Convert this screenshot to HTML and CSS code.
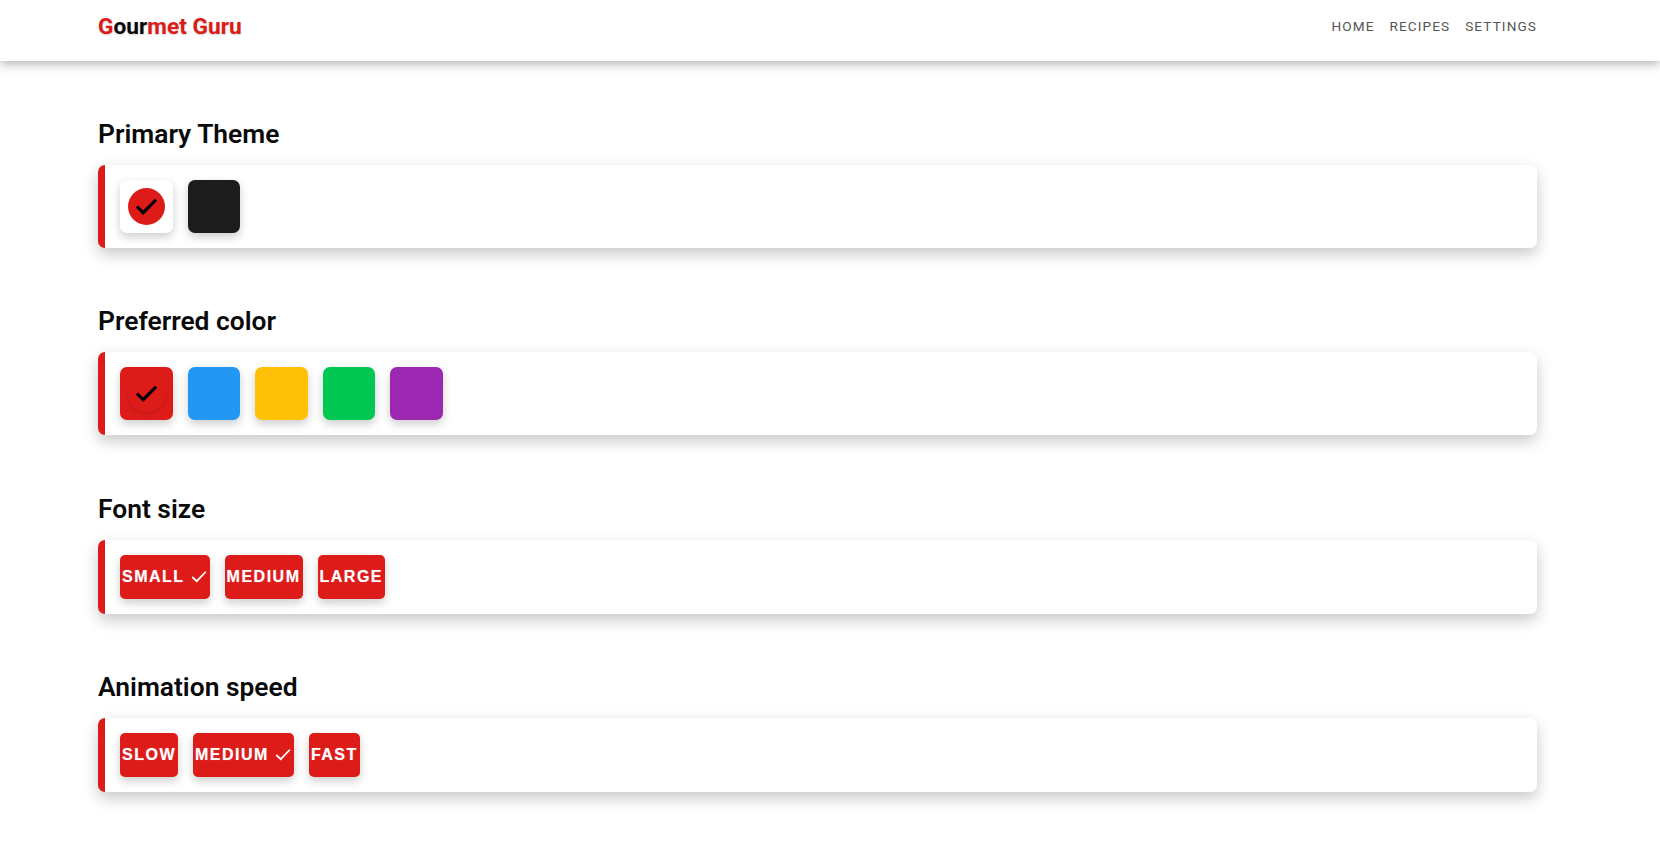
FILE: index.html
```html
<!DOCTYPE html>
<html lang="en">
<head>
  <meta charset="UTF-8" />
  <title>Gourmet Guru - Settings</title>
  <link rel="stylesheet" href="styles.css">
</head>
<body>

<header class="navbar">
  <div class="brand"><span class="red">G</span>our<span class="red">met Guru</span></div>
  <nav class="nav-links">
    <a href="#">Home</a>
    <a href="#">Recipes</a>
    <a href="#">Settings</a>
  </nav>
</header>

<main class="content">
  <section class="setting">
    <h2>Primary Theme</h2>
    <div class="card">
      <button class="swatch white" type="button">
        <span class="tick-circle">
          <svg viewBox="0 0 24 24"><path d="M3.5 12l5.5 5.5 11.5-11.5"/></svg>
        </span>
      </button>
      <button class="swatch dark" type="button"></button>
    </div>
  </section>

  <section class="setting">
    <h2>Preferred color</h2>
    <div class="card">
      <button class="swatch red-bg" type="button">
        <span class="tick-circle raised">
          <svg viewBox="0 0 24 24"><path d="M3.5 12l5.5 5.5 11.5-11.5"/></svg>
        </span>
      </button>
      <button class="swatch blue" type="button"></button>
      <button class="swatch amber" type="button"></button>
      <button class="swatch green" type="button"></button>
      <button class="swatch purple" type="button"></button>
    </div>
  </section>

  <section class="setting">
    <h2>Font size</h2>
    <div class="card">
      <button class="pill" type="button">Small
        <svg class="pill-tick" viewBox="0 0 24 24"><path d="M3 12l6 5.5L21 5"/></svg>
      </button>
      <button class="pill" type="button">Medium</button>
      <button class="pill" type="button">Large</button>
    </div>
  </section>

  <section class="setting">
    <h2>Animation speed</h2>
    <div class="card">
      <button class="pill" type="button">Slow</button>
      <button class="pill" type="button">Medium
        <svg class="pill-tick" viewBox="0 0 24 24"><path d="M3 12l6 5.5L21 5"/></svg>
      </button>
      <button class="pill" type="button">Fast</button>
    </div>
  </section>
</main>

</body>
</html>
```

FILE: styles.css
```css
* { box-sizing: border-box; margin: 0; padding: 0; }

body {
  font-family: Roboto, sans-serif;
  background: #fff;
  color: #0a0a0a;
}

.navbar {
  height: 61px;
  padding: 0 123px 9px 98px;
  display: flex;
  align-items: center;
  justify-content: space-between;
  background: #fff;
  box-shadow: 0 3px 10px rgba(0, 0, 0, 0.3);
}

.brand {
  font-size: 22.7px;
  font-weight: 700;
  text-shadow: 0 1px 2px rgba(0, 0, 0, 0.2);
}

.red { color: #dd1c1a; }

.nav-links {
  display: flex;
  gap: 15px;
}

.nav-links a {
  font-size: 13.6px;
  letter-spacing: 1.1px;
  text-transform: uppercase;
  text-decoration: none;
  color: #555;
}

.content {
  padding: 58px 123px 0 98px;
}

.setting {
  margin-bottom: 58.3px;
}

h2 {
  font-size: 26.4px;
  font-weight: 600;
  line-height: 30px;
  margin-bottom: 16px;
}

.card {
  display: flex;
  gap: 15px;
  padding: 15px;
  background: #fff;
  border-left: 7px solid #dd1c1a;
  border-radius: 7px;
  box-shadow: 0 6px 15px rgba(0, 0, 0, 0.22);
}

.swatch {
  width: 52.5px;
  height: 53px;
  border: none;
  border-radius: 7px;
  display: flex;
  align-items: center;
  justify-content: center;
  box-shadow: 0 4px 10px rgba(0, 0, 0, 0.2);
}

.white { background: #fff; }
.dark { background: #1c1c1c; }
.red-bg { background: #dd1c1a; }
.blue { background: #2196f3; }
.amber { background: #ffc107; }
.green { background: #00c853; }
.purple { background: #9c27b0; }

.tick-circle {
  width: 37px;
  height: 37px;
  border-radius: 50%;
  background: #dd1c1a;
  display: flex;
  align-items: center;
  justify-content: center;
}

.tick-circle.raised {
  box-shadow: 0 2px 5px rgba(0, 0, 0, 0.12);
}

.tick-circle svg {
  width: 27px;
  height: 27px;
  fill: none;
  stroke: #000;
  stroke-width: 2.8;
}

.pill {
  height: 44px;
  padding: 0 2px;
  border: none;
  border-radius: 5px;
  background: #dd1c1a;
  color: #fff;
  font-family: "Liberation Sans", Arial, sans-serif;
  font-size: 16px;
  font-weight: 700;
  letter-spacing: 1.5px;
  text-shadow: 0 0 1px rgba(255, 255, 255, 0.5);
  text-transform: uppercase;
  display: flex;
  align-items: center;
  justify-content: center;
  gap: 5px;
  box-shadow: 0 4px 10px rgba(0, 0, 0, 0.2);
}

.pill-tick {
  width: 18px;
  height: 18px;
  fill: none;
  stroke: #fff;
  stroke-width: 2.4;
}
```
